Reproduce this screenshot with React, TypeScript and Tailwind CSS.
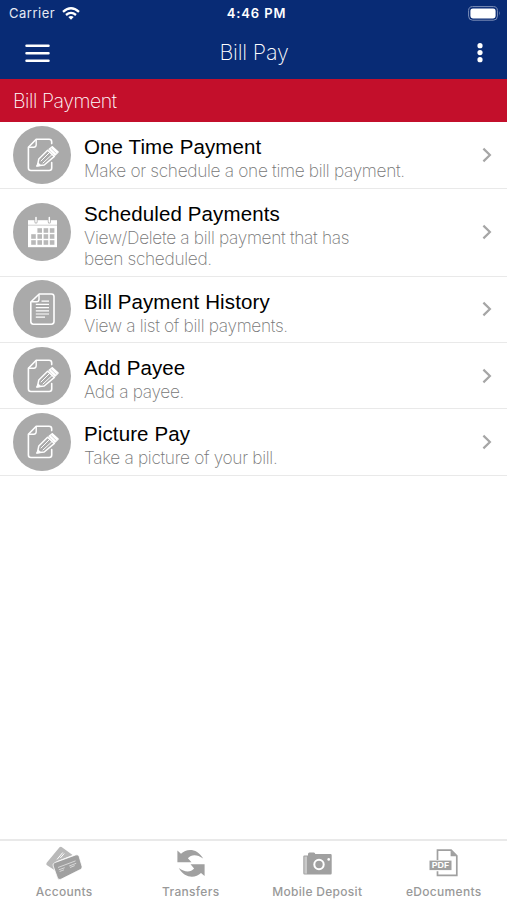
import { ReactNode } from "react";

const EditIcon = () => (
    <svg viewBox="0 0 58 58" className="w-full h-full" fill="none" stroke="#fff" strokeWidth="1.6" strokeLinejoin="round" strokeLinecap="round">
        <path d="M38.7 17.6V15.8Q38.7 13.2 36.1 13.2H23.2L15.4 21.3V42Q15.4 44.5 17.9 44.5H36.2Q38.7 44.5 38.7 42V36.5" />
        <path d="M23.2 13.6V18.8Q23.2 21.2 20.8 21.2H15.8" strokeWidth="1.4" />
        {/* crayon */}
        <path d="M25.8 33L34.6 24.2L41.4 30.4L31.2 39L24.4 39.8Z" strokeWidth="1.5" />
        <path d="M36 23.2L39.4 20.6L45.2 26L42.2 29.2Z" fill="#fff" strokeWidth="1.2" />
        <path d="M28 35L36.6 26.4M30 37L38.8 28.8" strokeWidth="1" />
        <path d="M23.6 40.2L25.2 37.2L27.4 39.4Z" fill="#fff" strokeWidth="1.2" />
        <path d="M38.2 22.6L43 27.2" stroke="#bbb" strokeWidth=".7" />
    </svg>
)

const CalendarIcon = () => (
    <svg viewBox="0 0 58 58" className="w-full h-full">
        <path d="M15 17.2H44V44.2H15Z" fill="#fff" />
        <path d="M15 22.2H44" stroke="#c4c4c4" strokeWidth=".8" />
        <path d="M23 17V19M36.3 17V19" stroke="#aaa" strokeWidth="3" strokeLinecap="round" />
        <path d="M23 14.4V19M36.3 14.4V19" stroke="#fff" strokeWidth="1.5" strokeLinecap="round" />
        <g fill="#b8b8b8">
            {[25.2, 31.2, 37.2].map((y, row) =>
                [18.2, 24.4, 30.6, 36.8].map((x, col) =>
                    row === 0 && col === 0 ? null : <rect key={`${x}-${y}`} x={x} y={y} width="4.6" height="4.6" />
                )
            )}
        </g>
    </svg>
)

const HistoryIcon = () => (
    <svg viewBox="0 0 58 58" className="w-full h-full" fill="none" stroke="#fff" strokeWidth="1.6" strokeLinejoin="round">
        <path d="M26.2 14H38.4Q41 14 41 16.6V41.6Q41 44.2 38.4 44.2H20.4Q17.8 44.2 17.8 41.6V22Z" />
        <path d="M26 14.4V19.2Q26 21.8 23.4 21.8H18.2" strokeWidth="1.4" />
        <path d="M28.5 21.2H36M22.8 24.4H36M22.8 27.6H36M22.8 30.8H36M22.8 34H36M22.8 37.2H32" strokeWidth="1.2" />
    </svg>
)

const AccountsIcon = () => (
    <svg viewBox="0 0 38 35" className="w-[38px] h-[35px]">
        <path d="M14.5 1.2Q16 .3 17.3 1.4L27.6 9L12.5 15.1Q9.5 16.3 10.6 19.2L12.4 26L2 19.3Q.6 18.2 1.7 16.7Z" fill="#b9b9b9" />
        <path d="M12 13.4L17.8 6.5M15.3 12L19.2 7.5" stroke="#fff" strokeWidth="1" />
        <path d="M9.8 16.6L30.8 8.9Q33.3 8.1 34.1 10.4L37 20.3Q37.7 22.6 35.4 23.5L15.9 33.3Q13.5 34.3 12.5 31.9L8.2 20Q7.3 17.6 9.8 16.6Z" fill="#a0a0a0" stroke="#fff" strokeWidth=".8" />
        <path d="M13 21.5L30.5 14.9M13.8 23.8L19.7 21.7M24.2 20L31.2 17.3M14.6 25.5L19 23.8M25 21.5L29.7 19.6" stroke="#e6e6e6" strokeWidth=".8" />
    </svg>
)

const TransfersIcon = () => (
    <svg viewBox="0 0 28 29" className="w-[28px] h-[29px]" fill="#a0a0a0">
        <path d="M.4 1.5L4 4.7C9.6-.8 20-1.2 26.2 9.6C20.5 5.3 14.4 4.9 10.9 9.2L14.5 13.3H.4Z" />
        <path d="M27.6 27.5L24 24.3C18.4 29.8 8 30.2 1.8 19.4C7.5 23.7 13.6 24.1 17.1 19.8L13.5 15.7H27.6Z" transform="translate(0 -.4)" />
    </svg>
)

const CameraIcon = () => (
    <svg viewBox="0 0 29 23" className="w-[29px] h-[23px]">
        <path d="M.3 4.5Q.3 3.5 1.3 3.5H5V2Q5 .5 6.5 .5H10.8Q12.2 .5 12.2 2H27.6Q28.7 2 28.7 3.2V21.3Q28.7 22.5 27.6 22.5H1.5Q.3 22.5 .3 21.3Z" fill="#a0a0a0" />
        <path d="M1.4 4.5H4V21.6H1.4Z" fill="#c9c9c9" />
        <circle cx="16" cy="12.5" r="4.7" fill="#a0a0a0" stroke="#fff" strokeWidth="2" />
        <circle cx="25.7" cy="7.4" r="1.3" fill="#fff" />
    </svg>
)

const PdfIcon = () => (
    <svg viewBox="0 0 29 28" className="w-[29px] h-[28px]">
        <path d="M8.5 11V1.2H22.1L27.8 6.9V26.3H8.5V22.3" fill="none" stroke="#a0a0a0" strokeWidth="1.7" />
        <path d="M21.6 1.2V7.3H27.8Z" fill="#a0a0a0" />
        <rect x=".5" y="11.6" width="22" height="9.5" fill="#a0a0a0" />
        <text x="11.5" y="19.1" textAnchor="middle" textLength="17.5" lengthAdjust="spacingAndGlyphs" fontFamily="Inter, sans-serif" fontSize="7.4" fontWeight="700" fill="#fff">PDF</text>
    </svg>
)

interface MenuItem {
    title: string
    lines: string[]
    icon: ReactNode
    rowClass: string
}

const menuItems: MenuItem[] = [
    { title: "One Time Payment", lines: ["Make or schedule a one time bill payment."], icon: <EditIcon />, rowClass: "h-[66.5px]" },
    { title: "Scheduled Payments", lines: ["View/Delete a bill payment that has", "been scheduled."], icon: <CalendarIcon />, rowClass: "h-[88px]" },
    { title: "Bill Payment History", lines: ["View a list of bill payments."], icon: <HistoryIcon />, rowClass: "h-[66.5px]" },
    { title: "Add Payee", lines: ["Add a payee."], icon: <EditIcon />, rowClass: "h-[66px]" },
    { title: "Picture Pay", lines: ["Take a picture of your bill."], icon: <EditIcon />, rowClass: "h-[66.5px]" },
]

const tabs = [
    { label: "Accounts", icon: <AccountsIcon /> },
    { label: "Transfers", icon: <TransfersIcon /> },
    { label: "Mobile Deposit", icon: <CameraIcon /> },
    { label: "eDocuments", icon: <PdfIcon /> },
]

const MenuRow = ({ item }: { item: MenuItem }) => (
    <div className={`flex items-center pl-[13px] pr-[15px] border-b border-[#e9e9e9] ${item.rowClass}`}>
        <div className="w-[58px] h-[58px] rounded-full bg-[#aaaaaa] shrink-0">{item.icon}</div>
        <div className="flex-1 ml-[13px] pt-[5px]">
            <p className="text-[20.5px] leading-[27px] tracking-[0.12px] text-black">{item.title}</p>
            {item.lines.map((line) => (
                <p key={line} className="font-['Inter',sans-serif] font-extralight text-[17.3px] leading-[21.5px] tracking-[-0.32px] text-[#777777] whitespace-nowrap">{line}</p>
            ))}
        </div>
        <svg viewBox="0 0 10 16" className="w-[10px] h-[16px]" fill="none" stroke="#a6a6a6" strokeWidth="2.2">
            <path d="M1.4 1.6L7.9 8L1.4 14.4" />
        </svg>
    </div>
)

export default function App() {
    return (
        <div className="w-[507px] h-[900px] flex flex-col bg-white overflow-hidden font-['Liberation_Sans',sans-serif]">
            {/* Barre de statut */}
            <div className="h-[27px] shrink-0 bg-[#082b75] text-white grid grid-cols-3 items-center pl-[9px] pr-[6px] font-['Inter',sans-serif] text-[13px]">
                <div className="flex items-center gap-[7px]">
                    <span className="tracking-[0.5px] text-[#e6eaf3] pt-px">Carrier</span>
                    <svg viewBox="0 0 18 13" className="w-[18px] h-[13px]" fill="none" stroke="#fff" strokeWidth="2.3">
                        <path d="M1 4.8Q9-2.2 17 4.8M4 8Q9 3.8 14 8" />
                        <path d="M6.3 10Q9 8 11.7 10L9 12.8Z" fill="#fff" stroke="none" />
                    </svg>
                </div>
                <span className="text-center font-semibold tracking-[0.9px] pl-[3px] pt-px">4:46 PM</span>
                <svg viewBox="0 0 33 15" className="w-[33px] h-[15px] justify-self-end">
                    <rect x=".6" y=".6" width="28.8" height="13.6" rx="4" fill="none" stroke="#7d8fb8" />
                    <rect x="2.4" y="2.4" width="25.2" height="10" rx="2.4" fill="#fff" />
                    <path d="M31 5Q32.6 7.4 31 9.8Z" fill="#7d8fb8" />
                </svg>
            </div>

            {/* En-tête */}
            <div className="h-[52px] shrink-0 bg-[#082b75] grid grid-cols-3 items-center pl-[25px] pr-[24px]">
                <svg viewBox="0 0 25 20" className="w-[25px] h-[20px]" stroke="#fff" strokeWidth="2.5" strokeLinecap="round">
                    <path d="M1.5 2.8H23.5M1.5 10.2H23.5M1.5 17.8H23.5" />
                </svg>
                <h1 className="text-center font-['Inter',sans-serif] font-extralight text-[21.5px] text-white tracking-[-0.2px] pb-px">Bill Pay</h1>
                <svg viewBox="0 0 6 20" className="w-[6px] h-[20px] justify-self-end" fill="#fff">
                    <circle cx="3" cy="2.7" r="2.6" />
                    <circle cx="3" cy="9.6" r="2.6" />
                    <circle cx="3" cy="16.7" r="2.6" />
                </svg>
            </div>

            <div className="h-[43px] shrink-0 bg-[#c30f2b] flex items-center pl-[13px] pt-[3px]">
                <h2 className="font-['Inter',sans-serif] font-extralight text-[19.5px] text-white tracking-[-0.45px]">Bill Payment</h2>
            </div>

            <div className="flex-1">
                {menuItems.map((item) => <MenuRow key={item.title} item={item} />)}
            </div>

            {/* Onglets du bas */}
            <div className="h-[61px] shrink-0 border-t-2 border-[#e9e9e9] grid grid-cols-4 pl-px">
                {tabs.map((tab) => (
                    <div key={tab.label} className="flex flex-col items-center">
                        <div className="h-[44px] flex items-center justify-center">{tab.icon}</div>
                        <span className="font-['Inter',sans-serif] font-medium text-[12px] leading-[14px] tracking-[0.3px] text-[#999999] whitespace-nowrap">{tab.label}</span>
                    </div>
                ))}
            </div>
        </div>
    )
}
